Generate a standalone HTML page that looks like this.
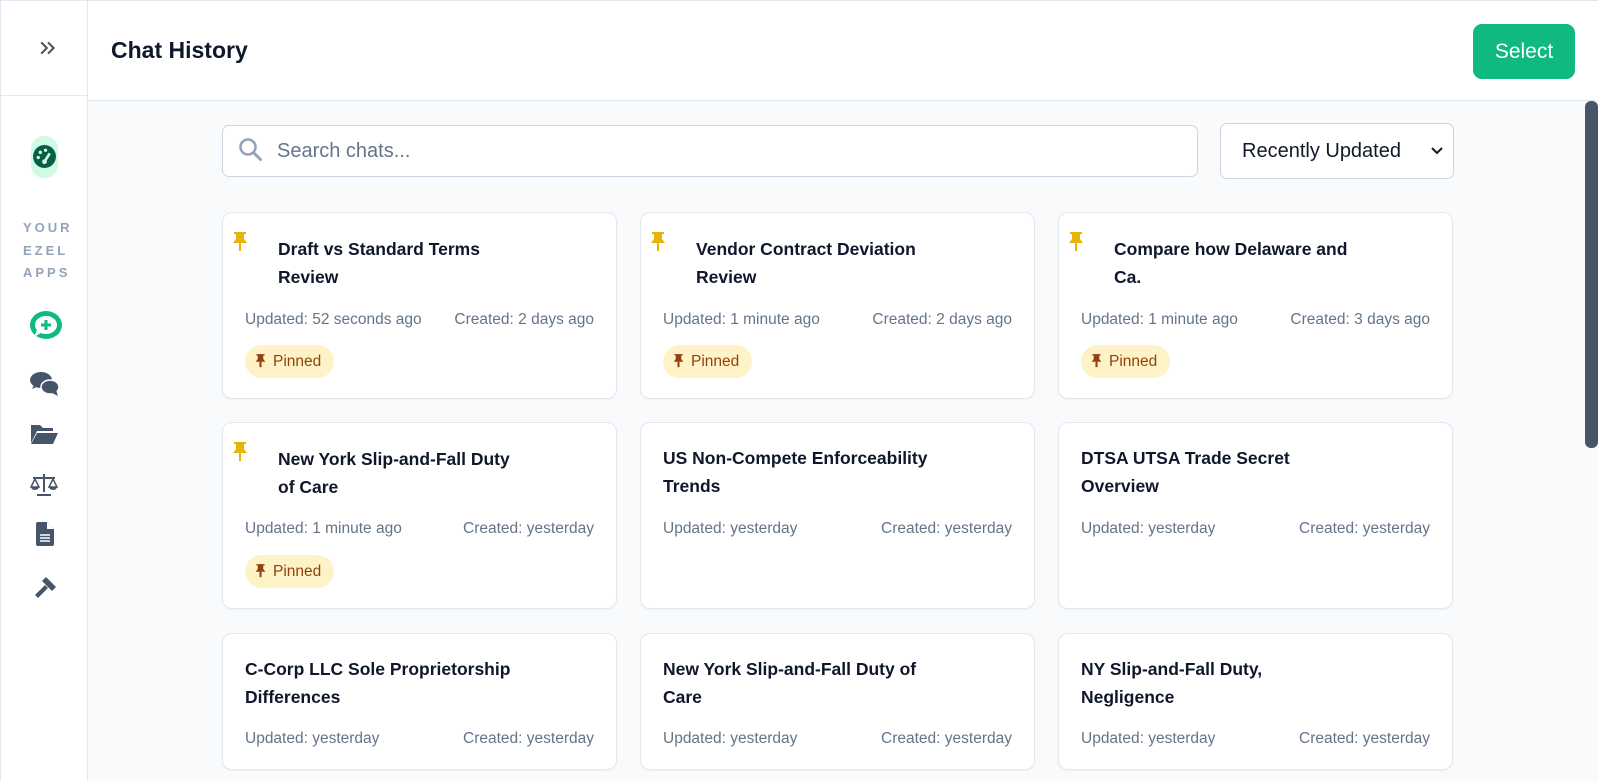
<!DOCTYPE html>
<html><head><meta charset="utf-8"><style>
*{box-sizing:border-box;margin:0;padding:0}
body{width:1598px;height:781px;overflow:hidden;background:#f8fafc;font-family:"Liberation Sans",sans-serif;position:relative}
.side{position:absolute;left:0;top:0;width:88px;height:781px;background:#fff;border-right:1px solid #e2e8f0;border-left:1px solid #e2e8f0}
.side .top{height:96px;border-bottom:1px solid #e2e8f0;border-top:1px solid #e2e8f0}
.header{position:absolute;left:88px;top:0;right:0;height:101px;background:#fff;border-bottom:1px solid #e2e8f0;border-top:1px solid #e2e8f0}
.header h1{position:absolute;left:23px;top:36px;font-size:23px;font-weight:600;color:#0f172a}
.btn{position:absolute;left:1385px;top:23px;width:102px;height:55px;background:#10b981;border-radius:9px;color:#fff;font-size:21px;text-align:center;line-height:55px}
.search{position:absolute;left:222px;top:125px;width:976px;height:52px;background:#fff;border:1px solid #cbd5e1;border-radius:7px}
.search span{position:absolute;left:54px;top:14px;font-size:20px;color:#64748b}
.sel{position:absolute;left:1220px;top:123px;width:234px;height:56px;background:#fff;border:1px solid #cbd5e1;border-radius:7px}
.sel span{position:absolute;left:21px;top:16px;font-size:20px;color:#111827}
.card{position:absolute;width:395px;background:#fff;border:1px solid #e2e8f0;border-radius:10px;box-shadow:0 1px 2px rgba(0,0,0,.04)}
.t{position:absolute;left:22px;top:23px;width:300px;font-size:17.5px;font-weight:600;color:#0f172a;line-height:27.5px}
.p .t{left:55px;width:240px}
.m{position:absolute;left:22px;right:22px;font-size:15.5px;color:#64748b}
.m b{font-weight:normal;float:right}
.pin{position:absolute;left:9px;top:19px}
.badge{position:absolute;left:22px;width:89px;height:33px;background:#fef3c7;border-radius:17px;color:#92400e;font-size:15.5px;line-height:33px;padding-left:28px}
.badge svg{position:absolute;left:10px;top:9px}
.ic{position:absolute;left:30px}
.apps{position:absolute;left:23px;top:217px;font-size:13px;font-weight:700;letter-spacing:3px;color:#94a3b8;line-height:22.5px}
.sb{position:absolute;left:1585px;top:101px;width:13px;height:347px;background:#475569;border-radius:6px}
</style></head><body>
<div class="side"><div class="top"></div></div>
<svg style="position:absolute;left:39px;top:39px" width="18" height="18" viewBox="0 0 16 16"><path d="M2 3l5 5-5 5M8 3l5 5-5 5" fill="none" stroke="#475569" stroke-width="1.8"/></svg>
<div style="position:absolute;left:31px;top:136px;width:27px;height:42px;background:#d1fae5;border-radius:13px"></div>
<svg style="position:absolute;left:32px;top:144px" width="25" height="25" viewBox="0 0 24 24"><circle cx="12" cy="12" r="11" fill="#065f46"/><circle cx="6" cy="13" r="1.6" fill="#d1fae5"/><circle cx="8" cy="8" r="1.6" fill="#d1fae5"/><circle cx="13" cy="6" r="1.6" fill="#d1fae5"/><path d="M12 17l5-8" stroke="#d1fae5" stroke-width="2.5"/><circle cx="12" cy="17" r="2.3" fill="#d1fae5"/></svg>
<div class="apps">YOUR<br>EZEL<br>APPS</div>
<svg class="ic" style="top:311px" width="32" height="30" viewBox="0 0 32 30"><ellipse cx="16" cy="14" rx="16" ry="14" fill="#10b981"/><ellipse cx="16" cy="14" rx="11" ry="9" fill="#fff"/><path d="M7 19l-3 7 7-4z" fill="#fff"/><path d="M16 9v10M11 14h10" stroke="#10b981" stroke-width="3"/></svg>
<svg class="ic" style="top:371px" width="30" height="26" viewBox="0 0 30 26"><ellipse cx="11" cy="9" rx="11" ry="8" fill="#475569"/><path d="M2 18l3-6 4 3z" fill="#475569"/><ellipse cx="20" cy="16" rx="9" ry="7" fill="#475569" stroke="#fff" stroke-width="1.5"/><path d="M28 25l-2-6-4 3z" fill="#475569"/></svg>
<svg class="ic" style="top:423px" width="28" height="22" viewBox="0 0 28 22"><path d="M1 2h9l3 3h10v3H7L1 20z" fill="#475569"/><path d="M7 10h21l-5 11H1z" fill="#475569"/></svg>
<svg class="ic" style="top:474px" width="28" height="22" viewBox="0 0 28 22"><path d="M13 0h2v18h-2zM3 3h22v2H3zM7 20h14v2H7z" fill="#475569"/><path d="M5 5l-4 8h8zM23 5l-4 8h8z" fill="none" stroke="#475569" stroke-width="1.5"/><path d="M1 13h8a4 3 0 0 1-8 0zM19 13h8a4 3 0 0 1-8 0z" fill="#475569"/></svg>
<svg class="ic" style="top:522px;left:36px" width="18" height="24" viewBox="0 0 18 24"><path d="M2 0h9l7 7v15a2 2 0 0 1-2 2H2a2 2 0 0 1-2-2V2a2 2 0 0 1 2-2z" fill="#475569"/><path d="M11 0v7h7" fill="#fff"/><path d="M4 13h10M4 16h10M4 19h10" stroke="#fff" stroke-width="1.5"/></svg>
<svg class="ic" style="top:576px;left:33px" width="24" height="24" viewBox="0 0 24 24"><path d="M13 1l10 10-4 4L9 5z" fill="#475569"/><path d="M12 9l-10 10 3 3 10-10z" fill="#475569"/></svg>
<div class="header"><h1>Chat History</h1><div class="btn">Select</div></div>
<div class="search"><svg style="position:absolute;left:15px;top:11px" width="26" height="26" viewBox="0 0 26 26"><circle cx="10" cy="10" r="7.5" fill="none" stroke="#94a3b8" stroke-width="2.6"/><path d="M15.5 15.5l7 7" stroke="#94a3b8" stroke-width="3" stroke-linecap="round"/></svg><span>Search chats...</span></div>
<div class="sel"><span>Recently Updated</span><svg style="position:absolute;left:210px;top:23px" width="12" height="8" viewBox="0 0 12 8"><path d="M1 1l5 5 5-5" fill="none" stroke="#111827" stroke-width="2"/></svg></div>
<div class="sb"></div>

<div class="card p" style="left:222px;top:212px;height:187px"><svg class="pin" width="16" height="20" viewBox="0 0 16 20"><path d="M2 0h12v2h-2v5l3 4H1l3-4V2H2z" fill="#eab308"/><path d="M8 11v8" stroke="#eab308" stroke-width="2"/></svg><div class="t">Draft vs Standard Terms Review</div><div class="m" style="top:98px">Updated: 52 seconds ago<b>Created: 2 days ago</b></div><div class="badge" style="top:132px"><svg width="11" height="14" viewBox="0 0 16 20"><path d="M2 0h12v2h-2v5l3 4H1l3-4V2H2z" fill="#92400e"/><path d="M8 11v8" stroke="#92400e" stroke-width="3"/></svg>Pinned</div></div>
<div class="card p" style="left:640px;top:212px;height:187px"><svg class="pin" width="16" height="20" viewBox="0 0 16 20"><path d="M2 0h12v2h-2v5l3 4H1l3-4V2H2z" fill="#eab308"/><path d="M8 11v8" stroke="#eab308" stroke-width="2"/></svg><div class="t">Vendor Contract Deviation Review</div><div class="m" style="top:98px">Updated: 1 minute ago<b>Created: 2 days ago</b></div><div class="badge" style="top:132px"><svg width="11" height="14" viewBox="0 0 16 20"><path d="M2 0h12v2h-2v5l3 4H1l3-4V2H2z" fill="#92400e"/><path d="M8 11v8" stroke="#92400e" stroke-width="3"/></svg>Pinned</div></div>
<div class="card p" style="left:1058px;top:212px;height:187px"><svg class="pin" width="16" height="20" viewBox="0 0 16 20"><path d="M2 0h12v2h-2v5l3 4H1l3-4V2H2z" fill="#eab308"/><path d="M8 11v8" stroke="#eab308" stroke-width="2"/></svg><div class="t">Compare how Delaware and Ca.</div><div class="m" style="top:98px">Updated: 1 minute ago<b>Created: 3 days ago</b></div><div class="badge" style="top:132px"><svg width="11" height="14" viewBox="0 0 16 20"><path d="M2 0h12v2h-2v5l3 4H1l3-4V2H2z" fill="#92400e"/><path d="M8 11v8" stroke="#92400e" stroke-width="3"/></svg>Pinned</div></div>

<div class="card p" style="left:222px;top:422px;height:187px"><svg class="pin" width="16" height="20" viewBox="0 0 16 20"><path d="M2 0h12v2h-2v5l3 4H1l3-4V2H2z" fill="#eab308"/><path d="M8 11v8" stroke="#eab308" stroke-width="2"/></svg><div class="t">New York Slip-and-Fall Duty of Care</div><div class="m" style="top:97px">Updated: 1 minute ago<b>Created: yesterday</b></div><div class="badge" style="top:132px"><svg width="11" height="14" viewBox="0 0 16 20"><path d="M2 0h12v2h-2v5l3 4H1l3-4V2H2z" fill="#92400e"/><path d="M8 11v8" stroke="#92400e" stroke-width="3"/></svg>Pinned</div></div>
<div class="card" style="left:640px;top:422px;height:187px"><div class="t" style="top:22px">US Non-Compete Enforceability Trends</div><div class="m" style="top:97px">Updated: yesterday<b>Created: yesterday</b></div></div>
<div class="card" style="left:1058px;top:422px;height:187px"><div class="t" style="top:22px;width:240px">DTSA UTSA Trade Secret Overview</div><div class="m" style="top:97px">Updated: yesterday<b>Created: yesterday</b></div></div>

<div class="card" style="left:222px;top:633px;height:137px"><div class="t" style="top:22px">C-Corp LLC Sole Proprietorship Differences</div><div class="m" style="top:96px">Updated: yesterday<b>Created: yesterday</b></div></div>
<div class="card" style="left:640px;top:633px;height:137px"><div class="t" style="top:22px;width:280px">New York Slip-and-Fall Duty of Care</div><div class="m" style="top:96px">Updated: yesterday<b>Created: yesterday</b></div></div>
<div class="card" style="left:1058px;top:633px;height:137px"><div class="t" style="top:22px;width:240px">NY Slip-and-Fall Duty, Negligence</div><div class="m" style="top:96px">Updated: yesterday<b>Created: yesterday</b></div></div>
</body></html>
